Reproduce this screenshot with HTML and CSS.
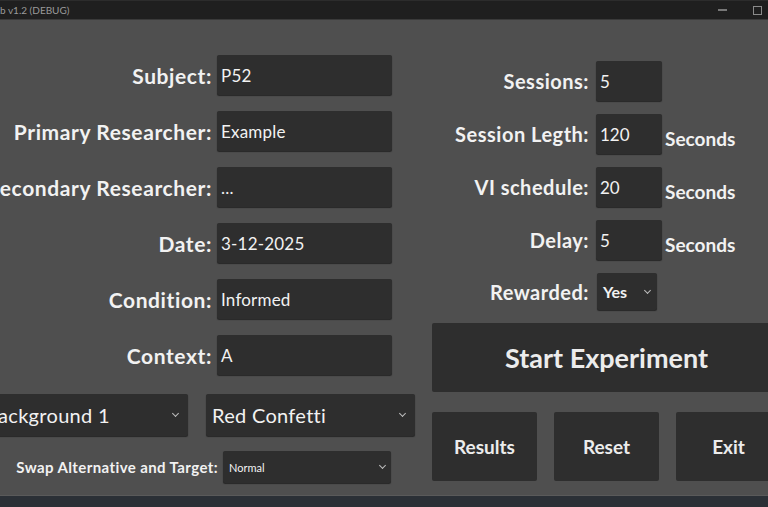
FILE: index.html
```html
<!DOCTYPE html>
<html lang="en">

<head>
    <meta charset="UTF-8">
    <meta name="viewport" content="width=device-width, initial-scale=1.0">
    <title>Lab v1.2 (DEBUG)</title>
    <link rel="stylesheet" href="styles.css">
</head>

<body>
    <div class="window">
        <div class="titlebar">
            <span class="title">b v1.2 (DEBUG)</span>
            <div class="controls">
                <span class="ctl-min"></span>
                <span class="ctl-max"></span>
                <span class="ctl-close"></span>
            </div>
        </div>

        <div class="main">
            <!-- left side: participant details -->
            <div class="left">
                <div class="form-left">
                    <label>Subject:</label>
                    <div class="field">P52</div>
                    <label>Primary Researcher:</label>
                    <div class="field">Example</div>
                    <label>Secondary Researcher:</label>
                    <div class="field">...</div>
                    <label>Date:</label>
                    <div class="field">3-12-2025</div>
                    <label>Condition:</label>
                    <div class="field">Informed</div>
                    <label>Context:</label>
                    <div class="field">A</div>
                </div>

                <div class="select-row">
                    <div class="select big">Background 1 <span class="chev"></span></div>
                    <div class="select big">Red Confetti <span class="chev"></span></div>
                </div>

                <div class="swap-row">
                    <label>Swap Alternative and Target:</label>
                    <div class="select small">Normal <span class="chev"></span></div>
                </div>
            </div>

            <!-- right side: session settings -->
            <div class="right">
                <div class="form-right">
                    <label>Sessions:</label>
                    <div class="field">5</div>
                    <span></span>
                    <label>Session Legth:</label>
                    <div class="field">120</div>
                    <span class="unit">Seconds</span>
                    <label>VI schedule:</label>
                    <div class="field">20</div>
                    <span class="unit">Seconds</span>
                    <label>Delay:</label>
                    <div class="field">5</div>
                    <span class="unit">Seconds</span>
                    <label>Rewarded:</label>
                    <div class="select yes">Yes <span class="chev"></span></div>
                    <span></span>
                </div>

                <button class="start-btn">Start Experiment</button>

                <div class="btn-row">
                    <button class="btn">Results</button>
                    <button class="btn">Reset</button>
                    <button class="btn">Exit</button>
                </div>
            </div>
        </div>
    </div>
</body>

</html>
```

FILE: styles.css
```css
body {
    margin: 0;
    padding: 0;
    background: #2b3036;
    font-family: "Lato", "DejaVu Sans", sans-serif;
    color: #f2f2f2;
    overflow: hidden;
    width: 768px;
    height: 507px;
}

.window {
    width: 840px;
    margin-left: -40px;
}

.titlebar {
    height: 18px;
    background: #1f1f1f;
    border-top: 1px solid #2c2c2c;
    display: flex;
    align-items: center;
    justify-content: space-between;
    padding-left: 40px;
}

.title {
    font-size: 10px;
    color: #9a9a9a;
}

.controls {
    display: flex;
    align-items: center;
    gap: 26px;
    padding-right: 3px;
}

.ctl-min {
    width: 9px;
    height: 2px;
    background: #777;
}

.ctl-max {
    width: 7px;
    height: 7px;
    border: 1px solid #8a8a8a;
}

.ctl-close {
    width: 9px;
    height: 9px;
}

.main {
    height: 477px;
    background: #4f4f4f;
    border-top: 1px solid #3a3a3a;
    border-bottom: 1px solid #5a5a5a;
    display: flex;
    box-sizing: border-box;
    padding-top: 35px;
}

label {
    font-weight: 700;
    white-space: nowrap;
}

.field,
.select {
    background: #2e2e2e;
    border-radius: 2px;
    box-shadow: 0 1px 1px #262626;
    box-sizing: border-box;
    display: flex;
    align-items: center;
    white-space: nowrap;
}

.left {
    width: 472px;
    display: flex;
    flex-direction: column;
}

.form-left {
    display: grid;
    grid-template-columns: 252px 175px;
    column-gap: 5px;
    row-gap: 16px;
    align-items: center;
}

.form-left label {
    font-size: 21px;
    letter-spacing: 0.6px;
    display: flex;
    justify-content: flex-end;
}

.form-left .field {
    height: 40px;
    padding-left: 4px;
    font-size: 17px;
    letter-spacing: 0.2px;
}

.select-row {
    display: flex;
    gap: 18px;
    margin-top: 19px;
    padding-left: 19px;
}

.select {
    justify-content: space-between;
    position: relative;
}

.select.big {
    width: 209px;
    height: 42px;
    font-size: 20px;
    letter-spacing: 0.3px;
    padding: 0 10px 0 6px;
}

.chev {
    width: 4px;
    height: 4px;
    border-right: 1.5px solid #bdbdbd;
    border-bottom: 1.5px solid #bdbdbd;
    transform: rotate(45deg);
    margin-top: -3px;
}

.swap-row {
    display: flex;
    align-items: center;
    gap: 5px;
    margin-top: 15px;
    padding-left: 55px;
}

.swap-row label {
    width: 203px;
    font-size: 15px;
    letter-spacing: 0.4px;
    display: flex;
    justify-content: flex-end;
}

.select.small {
    width: 168px;
    height: 32px;
    font-size: 11px;
    padding: 0 6px 0 6px;
}

.right {
    width: 349px;
    display: flex;
    flex-direction: column;
}

.form-right {
    display: grid;
    grid-template-columns: 157px 66px auto;
    column-gap: 7px;
    row-gap: 13px;
    align-items: center;
    margin-top: 6px;
}

.form-right label {
    font-size: 20px;
    letter-spacing: 0.5px;
    display: flex;
    justify-content: flex-end;
}

.form-right .field {
    height: 40px;
    padding-left: 4px;
    font-size: 17px;
}

.unit {
    font-size: 19px;
    font-weight: 700;
    align-self: end;
    margin-left: -4px;
    padding-bottom: 4px;
}

.select.yes {
    width: 60px;
    height: 37px;
    font-size: 16px;
    font-weight: 700;
    padding: 0 7px 0 6px;
    margin-left: 1px;
}

button {
    font-family: inherit;
    color: #ececec;
    background: #2e2e2e;
    border: none;
    border-radius: 2px;
    cursor: pointer;
}

.start-btn {
    margin-top: 13px;
    height: 69px;
    font-size: 27px;
    font-weight: 700;
    text-align: left;
    padding-left: 73px;
}

.btn-row {
    display: flex;
    gap: 17px;
    margin-top: 20px;
}

.btn {
    width: 105px;
    height: 69px;
    font-size: 19px;
    font-weight: 700;
}
```
